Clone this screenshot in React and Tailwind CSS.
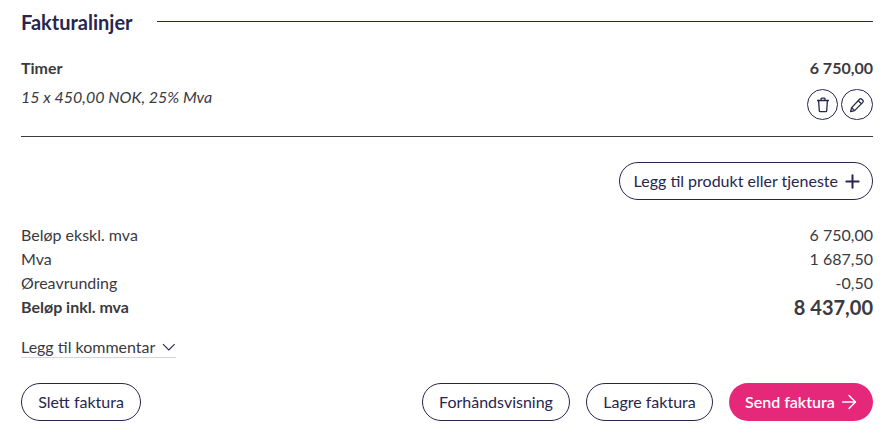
import { ArrowRight, Plus } from "lucide-react";

const Trash = () => (
  <svg width="14" height="16" viewBox="0 0 14 16" fill="none" stroke="currentColor" strokeWidth="1.3">
    <path d="M1 3.5h12M2.6 3.5l.7 10.2c0 .6.4 1 1 1h5.4c.6 0 1-.4 1-1l.7-10.2M5 3.5V2c0-.5.3-.8.8-.8h2.4c.5 0 .8.3.8.8v1.5" />
  </svg>
);

const PencilIcon = () => (
  <svg width="16" height="16" viewBox="0 0 16 16" fill="none" stroke="currentColor" strokeWidth="1.3" strokeLinejoin="round">
    <path d="M10.6 2.2c.6-.6 1.5-.6 2.1 0l1.1 1.1c.6.6.6 1.5 0 2.1L5.6 13.6l-4 1 1-4z" />
    <path d="M9.2 3.6l3.2 3.2M2.6 10.6l2.9 2.9" />
  </svg>
);

const Chevron = () => (
  <svg width="14" height="8" viewBox="0 0 14 8" fill="none" stroke="#26264f" strokeWidth="1.1">
    <path d="M1 1l6 6 6-6" />
  </svg>
);

const Button = ({ children, className = "" }) => (
  <button className={`h-[38px] rounded-full border border-[#26264f] bg-white text-base text-[#26264f] flex items-center justify-center ${className}`}>
    {children}
  </button>
);

const Row = ({ label, value }) => (
  <div className="flex justify-between h-6 items-center">
    <span>{label}</span>
    <span>{value}</span>
  </div>
);

export default function App() {
  return (
    <div className="w-[891px] h-[434px] overflow-hidden bg-white pl-[21px] pr-[18px] text-base text-[#3a3a3f] font-['Lato',sans-serif]">
      {/* Heading */}
      <div className="flex items-center h-[46px] -mt-px">
        <h2 className="text-[20px] font-bold text-[#26264f] mr-6 leading-[46px]">Fakturalinjer</h2>
        <div className="flex-1 h-px bg-[#26264f] -translate-y-px" />
      </div>

      {/* Line item */}
      <div className="pt-[11px] h-[80px] border-b border-[#3a3a3f] box-content -mb-px">
        <div className="flex justify-between h-6 items-center font-bold">
          <span>Timer</span>
          <span>6 750,00</span>
        </div>
        <div className="flex justify-between">
          <span className="italic mt-[7px] leading-5">15 x 450,00 NOK, 25% Mva</span>
          <div className="flex gap-[3px] mt-[9px] text-[#26264f]">
            <button className="w-[31px] h-[31px] rounded-full border border-[#26264f] flex items-center justify-center"><Trash /></button>
            <button className="w-[32px] h-[31px] rounded-full border border-[#26264f] flex items-center justify-center"><PencilIcon /></button>
          </div>
        </div>
      </div>

      <div className="flex justify-end mt-[26px]">
        <Button className="w-[254px] !justify-end gap-[4px] pr-[9px]">
          Legg til produkt eller tjeneste <Plus size={21} strokeWidth={2.3} />
        </Button>
      </div>

      {/* Totals */}
      <div className="mt-[23px]">
        <Row label="Beløp ekskl. mva" value="6 750,00" />
        <Row label="Mva" value="1 687,50" />
        <Row label="Øreavrunding" value="-0,50" />
        <div className="flex justify-between h-6 items-center font-bold">
          <span>Beløp inkl. mva</span>
          <span className="text-[20px]">8 437,00</span>
        </div>
      </div>

      <div className="mt-[18px] inline-flex items-center gap-[7px] border-b border-[#d5d5da] h-[21px] w-[155px] whitespace-nowrap">
        <span>Legg til kommentar</span>
        <Chevron />
      </div>

      {/* Actions */}
      <div className="flex justify-between mt-[24px]">
        <Button className="w-[120px]">Slett faktura</Button>
        <div className="flex gap-4">
          <Button className="w-[148px]">Forhåndsvisning</Button>
          <Button className="w-[127px]">Lagre faktura</Button>
          <button className="w-[144px] h-[38px] rounded-full bg-[#e5287a] text-white text-base font-semibold flex items-center justify-start pl-[16px] gap-[3px] whitespace-nowrap">
            Send faktura <ArrowRight size={22} strokeWidth={1.6} />
          </button>
        </div>
      </div>
    </div>
  );
}
